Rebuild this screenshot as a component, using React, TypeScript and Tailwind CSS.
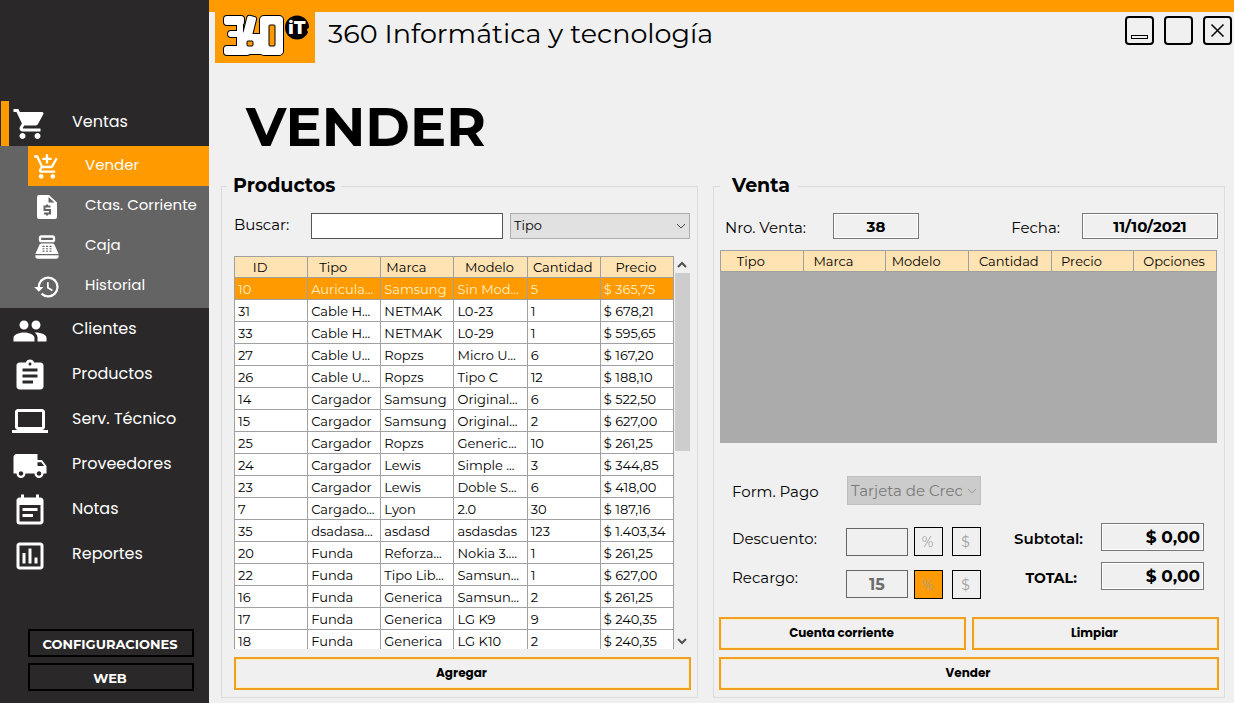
import React, { useState } from "react";
import {
  MdAddShoppingCart,
  MdAssignment,
  MdEventNote,
  MdHistory,
  MdLaptop,
  MdLocalShipping,
  MdOutlineAssessment,
  MdPeople,
  MdPointOfSale,
  MdShoppingCart,
} from "react-icons/md";

type NavItem = { label: string; icon: React.ComponentType<{ className?: string }> };

function InvoiceIcon({ className }: { className?: string }) {
  return (
    <svg viewBox="0 0 28 28" className={className} aria-hidden="true">
      <path d="M6 2h10l8 7.500V24a2 2 0 0 1-2 2H6a2 2 0 0 1-2-2V4a2 2 0 0 1 2-2z" fill="currentColor" />
      <path d="M15.500 4v5.500h6z" fill="#646464" />
      <path d="M17.500 13.500h-6v3.500h5.500v3.500h-6M14 11.500v2M14 20.500v2" fill="none" stroke="#646464" strokeWidth="2" />
    </svg>
  );
}

const subItems: NavItem[] = [
  { label: "Vender", icon: MdAddShoppingCart },
  { label: "Ctas. Corriente", icon: InvoiceIcon },
  { label: "Caja", icon: MdPointOfSale },
  { label: "Historial", icon: MdHistory },
];

const mainItems: NavItem[] = [
  { label: "Clientes", icon: MdPeople },
  { label: "Productos", icon: MdAssignment },
  { label: "Serv. Técnico", icon: MdLaptop },
  { label: "Proveedores", icon: MdLocalShipping },
  { label: "Notas", icon: MdEventNote },
  { label: "Reportes", icon: MdOutlineAssessment },
];

const products: string[][] = [
  ["10", "Auricula...", "Samsung", "Sin Mod...", "5", "$ 365,75"],
  ["31", "Cable H...", "NETMAK", "L0-23", "1", "$ 678,21"],
  ["33", "Cable H...", "NETMAK", "L0-29", "1", "$ 595,65"],
  ["27", "Cable U...", "Ropzs", "Micro U...", "6", "$ 167,20"],
  ["26", "Cable U...", "Ropzs", "Tipo C", "12", "$ 188,10"],
  ["14", "Cargador", "Samsung", "Original...", "6", "$ 522,50"],
  ["15", "Cargador", "Samsung", "Original...", "2", "$ 627,00"],
  ["25", "Cargador", "Ropzs", "Generic...", "10", "$ 261,25"],
  ["24", "Cargador", "Lewis", "Simple ...", "3", "$ 344,85"],
  ["23", "Cargador", "Lewis", "Doble S...", "6", "$ 418,00"],
  ["7", "Cargado...", "Lyon", "2.0", "30", "$ 187,16"],
  ["35", "dsadasa...", "asdasd", "asdasdas", "123", "$ 1.403,34"],
  ["20", "Funda", "Reforza...", "Nokia 3....", "1", "$ 261,25"],
  ["22", "Funda", "Tipo Lib...", "Samsun...", "1", "$ 627,00"],
  ["16", "Funda", "Generica", "Samsun...", "2", "$ 261,25"],
  ["17", "Funda", "Generica", "LG K9", "9", "$ 240,35"],
  ["18", "Funda", "Generica", "LG K10", "2", "$ 240,35"],
];

const productColumns = [
  { label: "ID", sortable: true },
  { label: "Tipo", sortable: true },
  { label: "Marca", sortable: true },
  { label: "Modelo", sortable: false },
  { label: "Cantidad", sortable: false },
  { label: "Precio", sortable: false },
];

const saleColumns = [
  { label: "Tipo", sortable: true },
  { label: "Marca", sortable: true },
  { label: "Modelo", sortable: true },
  { label: "Cantidad", sortable: false },
  { label: "Precio", sortable: true },
  { label: "Opciones", sortable: false },
];

function MarkShapes() {
  return (
    <>
      <rect x="9" y="4" width="20" height="9" rx="3" />
      <rect x="13" y="19" width="16" height="6" rx="3" />
      <rect x="9" y="34" width="26" height="9" rx="3" />
      <rect x="22" y="6" width="6" height="35" rx="2" />
      <rect x="30" y="4" width="9" height="23" rx="2" transform="rotate(14 34 15)" />
      <rect x="26" y="22" width="22" height="20" rx="3" />
      <rect x="45" y="4" width="23" height="39" rx="4" />
    </>
  );
}

function Logo() {
  return (
    <svg viewBox="0 0 100 51" className="h-[51px] w-[100px] shrink-0 bg-[#ff9b00]" role="img" aria-label="360 iT">
      <g fill="#000" stroke="#000" strokeWidth="2">
        <MarkShapes />
      </g>
      <g fill="#fff">
        <MarkShapes />
      </g>
      <rect x="32" y="29" width="6" height="5" rx="1" fill="#ff9b00" stroke="#000" />
      <rect x="54" y="13" width="6" height="21" rx="1" fill="#ff9b00" stroke="#000" />
      <circle cx="82" cy="15.500" r="12" fill="#000" />
      <circle cx="94" cy="18" r="2" fill="#ff9b00" />
      <text x="82" y="22" textAnchor="middle" fontFamily="Inter, sans-serif" fontWeight="900" fontSize="18" fill="#fff">
        iT
      </text>
    </svg>
  );
}

function Chevron({ up = false, className = "" }: { up?: boolean; className?: string }) {
  return (
    <svg viewBox="0 0 10 10" className={className} fill="none" stroke="currentColor" aria-hidden="true">
      <path d={up ? "M1 7 5 3l4 4" : "M1 3l4 4 4-4"} />
    </svg>
  );
}

function HeaderRow({ columns }: { columns: { label: string; sortable: boolean }[] }) {
  return (
    <tr className="h-[21px] bg-[#ffe3b3]">
      {columns.map((c) => (
        <th key={c.label} scope="col" className="w-1/6 border border-[#a0a0a0] p-0 pr-0.5 text-center font-normal leading-5">
          <span className={c.sortable ? "pr-5" : ""}>{c.label}</span>
        </th>
      ))}
    </tr>
  );
}

function ActionButton({ children, className = "" }: { children: React.ReactNode; className?: string }) {
  return (
    <button
      type="button"
      className={`h-[33px] border-2 border-[#f0a020] pr-0.5 pb-0.5 font-['Poppins','Montserrat','Inter',sans-serif] text-xs font-bold shadow-[inset_0_0_0_1px_#ffeebb] ${className}`}
    >
      {children}
    </button>
  );
}

function UnitButton({ children, label, active = false }: { children: string; label: string; active?: boolean }) {
  return (
    <button
      type="button"
      disabled
      aria-label={label}
      className={`size-[29px] border border-black pr-0.5 text-sm text-[#a0a0a0] ${active ? "bg-[#ff9b00]" : ""}`}
    >
      {children}
    </button>
  );
}

function Sidebar() {
  return (
    <aside className="flex w-[209px] shrink-0 flex-col bg-[#2a2829] text-white">
      <nav className="pt-[101px] font-['Poppins','Montserrat','Inter',sans-serif] text-base">
        <button type="button" className="flex h-[45px] w-full items-center pl-px text-left">
          <span className="h-full w-2 bg-[#ff9b00]" />
          <MdShoppingCart className="ml-[3px] size-9" />
          <span className="ml-6 pb-1">Ventas</span>
        </button>
        <div className="bg-[#646464] pb-0.5 pl-7">
          {subItems.map(({ label, icon: Icon }, i) => (
            <button
              key={label}
              type="button"
              className={`flex h-10 w-full items-center whitespace-nowrap pl-[5px] text-left text-[15px] ${
                i === 0 ? "bg-[#ff9b00]" : ""
              }`}
            >
              <Icon className="mt-0.5 size-7" />
              <span className="ml-6 pb-0.5">{label}</span>
            </button>
          ))}
        </div>
        {mainItems.map(({ label, icon: Icon }) => (
          <button key={label} type="button" className="flex h-[45px] w-full items-center pl-3 text-left">
            <Icon className="size-9" />
            <span className="ml-6 pb-1">{label}</span>
          </button>
        ))}
      </nav>
      <div className="mt-auto flex flex-col gap-1.5 pr-[15px] pb-3 pl-7 text-[13px] font-bold">
        <button type="button" className="h-7 border-2 border-black pt-1 pr-0.5">CONFIGURACIONES</button>
        <button type="button" className="h-7 border-2 border-black pt-1 pr-0.5">WEB</button>
      </div>
    </aside>
  );
}

function ProductsPanel() {
  const [selected, setSelected] = useState(0);
  return (
    <fieldset className="flex min-w-0 flex-col border border-[#dcdcdc] pr-1.5 pb-[7px] pl-3">
      <legend className="-ml-[7px] h-7 px-1.5 text-[19px] leading-7 font-bold">Productos</legend>
      <div className="flex items-center pt-[13px] pr-px">
        <label htmlFor="buscar" className="w-[77px] shrink-0 pb-0.5 text-[15px]">Buscar:</label>
        <input id="buscar" className="h-[26px] min-w-0 flex-1 border border-[#555] bg-white px-1 text-sm" />
        <div className="relative ml-[7px] w-[180px] shrink-0">
          <select aria-label="Tipo" className="block h-[26px] w-full appearance-none border border-[#adadad] bg-[#e1e1e1] px-[3px] text-[13px]">
            <option>Tipo</option>
          </select>
          <Chevron className="pointer-events-none absolute top-2 right-1 size-2.5 text-[#444]" />
        </div>
      </div>
      <div className="mt-[17px] flex h-[393px] overflow-hidden pr-px">
        <div className="min-w-0 flex-1">
          <table className="w-full table-fixed border-collapse text-[13px]">
            <thead>
              <HeaderRow columns={productColumns} />
            </thead>
            <tbody>
              {products.map((row, r) => (
                <tr
                  key={row[0]}
                  onClick={() => setSelected(r)}
                  className={`h-[22px] ${r === selected ? "bg-[#ff9b00] text-[#fff0c8]" : "bg-white"}`}
                >
                  {row.map((cell, c) => (
                    <td key={c} className="overflow-hidden border border-[#a0a0a0] p-0 pl-[3px] leading-5 whitespace-nowrap">
                      {cell}
                    </td>
                  ))}
                </tr>
              ))}
            </tbody>
          </table>
        </div>
        <div className="flex w-4 shrink-0 flex-col items-center text-[#505050]">
          <button type="button" aria-label="Subir" className="flex h-[17px] w-full items-center justify-center">
            <Chevron up className="size-2.5 stroke-2" />
          </button>
          <div className="flex-1 self-stretch pl-px">
            <div className="h-[178px] bg-[#cdcdcd]" />
          </div>
          <button type="button" aria-label="Bajar" className="flex h-[17px] w-full items-center justify-center">
            <Chevron className="size-2.5 stroke-2" />
          </button>
        </div>
      </div>
      <ActionButton className="mt-auto">Agregar</ActionButton>
    </fieldset>
  );
}

const readOnlyField = "border border-[#777] shadow-[inset_0_0_0_1px_#fff] font-bold";

function SalePanel() {
  return (
    <fieldset className="flex min-w-0 flex-col border border-[#dcdcdc] px-[5px] pb-[7px]">
      <legend className="ml-px h-7 pr-2 pl-3 text-[19px] leading-7 font-bold">Venta</legend>
      <div className="flex items-center px-px pt-[13px] text-[15px] leading-5">
        <label htmlFor="nro" className="ml-[5px] w-[108px] pt-1">Nro. Venta:</label>
        <input id="nro" readOnly defaultValue="38" className={`h-[26px] w-[86px] text-center ${readOnlyField}`} />
        <label htmlFor="fecha" className="mr-[22px] ml-auto pt-1">Fecha:</label>
        <input id="fecha" readOnly defaultValue="11/10/2021" className={`h-[26px] w-[136px] text-center ${readOnlyField}`} />
      </div>
      <div className="mr-0.5 ml-px mt-[11px] h-[193px] bg-[#ababab]">
        <table className="w-full table-fixed border-collapse text-[13px]">
          <thead>
            <HeaderRow columns={saleColumns} />
          </thead>
        </table>
      </div>
      <div className="mt-[33px] flex items-center pl-[13px] text-[15px]">
        <label htmlFor="pago" className="w-[115px] pt-1">Form. Pago</label>
        <div className="relative w-[134px]">
          <select
            id="pago"
            disabled
            className="block h-[29px] w-full appearance-none border border-[#bfbfbf] bg-[#cccccc] pt-0.5 pr-[18px] pl-[3px] text-[#7a7a7a] opacity-100"
          >
            <option>Tarjeta de Credito</option>
          </select>
          <Chevron className="pointer-events-none absolute top-2.5 right-1 size-2.5 text-[#999]" />
        </div>
      </div>
      <div className="mt-[18px] flex justify-between pr-[15px] pl-[13px]">
        <div className="mt-1 grid grid-cols-[114px_62px_35px_38px] gap-y-3.5 text-[15px] leading-5">
          <label htmlFor="descuento" className="self-center pb-1.5">Descuento:</label>
          <input id="descuento" disabled className="h-7 self-end border border-[#666] text-center" />
          <div className="flex justify-end"><UnitButton label="Descuento en porcentaje">%</UnitButton></div>
          <div className="flex justify-end"><UnitButton label="Descuento en pesos">$</UnitButton></div>
          <label htmlFor="recargo" className="self-start leading-4">Recargo:</label>
          <input
            id="recargo"
            disabled
            defaultValue="15"
            className="h-7 self-start border border-[#666] text-center text-base font-bold text-[#6d6d6d]"
          />
          <div className="flex justify-end"><UnitButton label="Recargo en porcentaje" active>%</UnitButton></div>
          <div className="flex justify-end"><UnitButton label="Recargo en pesos">$</UnitButton></div>
        </div>
        <div className="flex flex-col gap-[11px] text-[15px] font-semibold">
          <div className="flex items-center">
            <label htmlFor="subtotal" className="mr-[18px] flex-1 pt-1">Subtotal:</label>
            <input id="subtotal" readOnly defaultValue="$ 0,00" className={`h-7 w-[103px] px-[3px] text-right text-[17px] ${readOnlyField}`} />
          </div>
          <div className="flex items-center">
            <label htmlFor="total" className="mr-6 ml-auto pt-1 text-sm font-bold">TOTAL:</label>
            <input id="total" readOnly defaultValue="$ 0,00" className={`h-7 w-[103px] px-[3px] text-right text-[17px] ${readOnlyField}`} />
          </div>
        </div>
      </div>
      <div className="mt-auto grid grid-cols-2 gap-x-1.5 gap-y-[7px]">
        <ActionButton>Cuenta corriente</ActionButton>
        <ActionButton>Limpiar</ActionButton>
        <ActionButton className="col-span-2">Vender</ActionButton>
      </div>
    </fieldset>
  );
}

const windowButton = "flex size-[29px] items-center justify-center rounded-sm border-2 border-black";

export default function App() {
  return (
    <div className="flex min-h-screen bg-[#f0f0f0] font-['Montserrat','Inter',sans-serif] text-black">
      <Sidebar />
      <main className="flex min-w-0 flex-1 flex-col">
        <div className="h-3 bg-[#ff9b00]" />
        <header className="flex items-start pl-1.5">
          <Logo />
          <p className="ml-[13px] pt-1 text-[27px] leading-9">360 Informática y tecnología</p>
          <div className="mt-1 mr-0.5 ml-auto flex gap-2.5">
            <button type="button" aria-label="Minimizar" className={windowButton}>
              <svg viewBox="0 0 25 25" className="size-[25px]" fill="none" stroke="#000" aria-hidden="true">
                <rect x="4.500" y="17.500" width="16" height="3" />
              </svg>
            </button>
            <button type="button" aria-label="Maximizar" className={windowButton} />
            <button type="button" aria-label="Cerrar" className={windowButton}>
              <svg viewBox="0 0 25 25" className="size-[25px]" fill="none" stroke="#000" strokeWidth="1.500" aria-hidden="true">
                <path d="M6.500 6.500l12 12M18.500 6.500l-12 12" />
              </svg>
            </button>
          </div>
        </header>
        <h1 className="flex h-[109px] items-center pt-[18px] pl-[37px] text-[54px] leading-none font-bold">VENDER</h1>
        <div className="grid flex-1 grid-cols-[477fr_512fr] gap-[15px] pr-[9px] pb-[5px] pl-3">
          <ProductsPanel />
          <SalePanel />
        </div>
      </main>
    </div>
  );
}
